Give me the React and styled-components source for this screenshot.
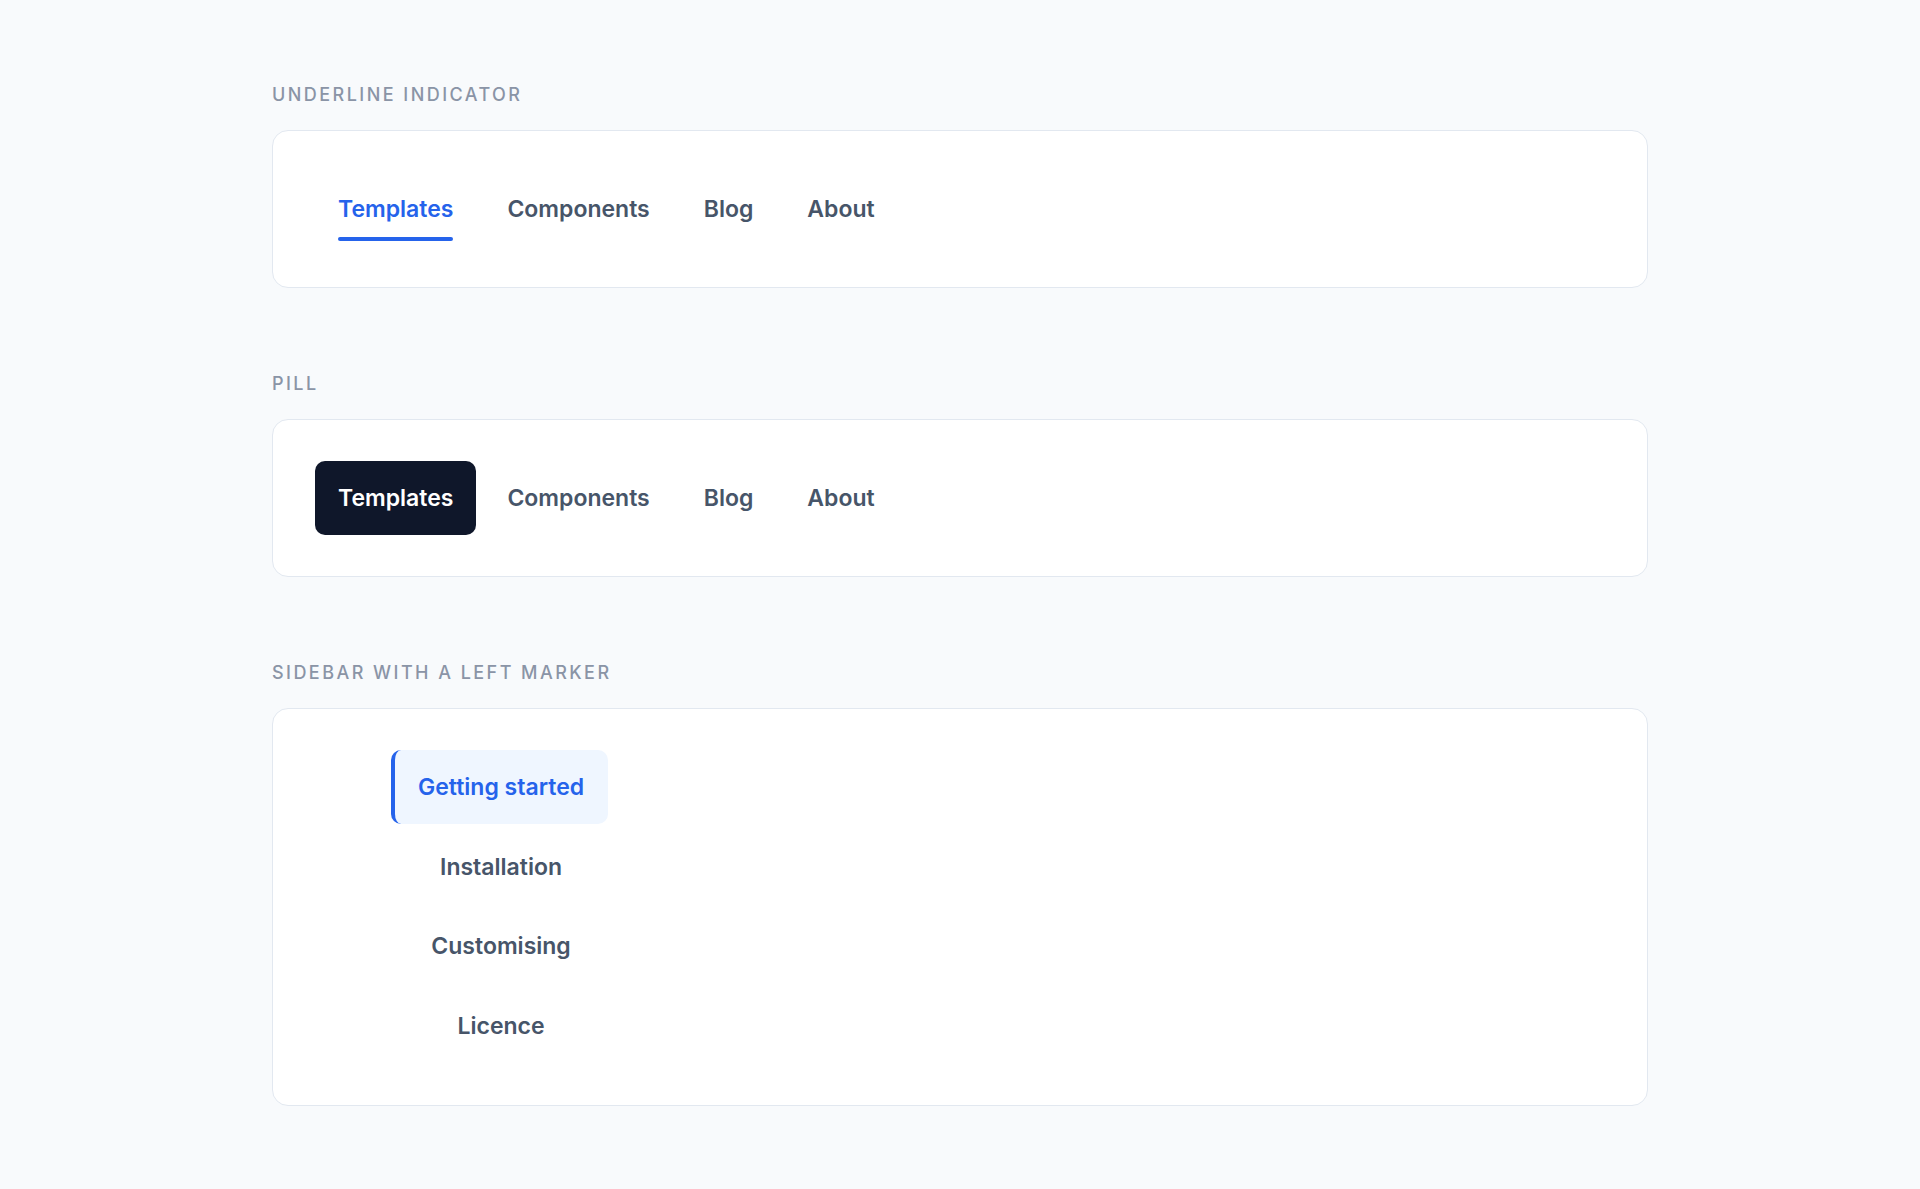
import styled, { createGlobalStyle } from "styled-components";

const GlobalStyle = createGlobalStyle`
  body {
    margin: 0;
    background: #f8fafc;
    font-family: Inter, "Noto Sans", "Liberation Sans", sans-serif;
    -webkit-font-smoothing: antialiased;
  }
`;

const Page = styled.main`
  width: 1376px;
  margin: 0 auto;
  padding: 81px 0 80px;
  display: flex;
  flex-direction: column;
  gap: 82px;
`;

const Section = styled.section`
  display: flex;
  flex-direction: column;
`;

const Label = styled.h2`
  margin: 0 0 22px;
  font-size: 18px;
  line-height: 27px;
  font-weight: 500;
  letter-spacing: 2.45px;
  text-transform: uppercase;
  color: #8a94a6;
`;

const Card = styled.div`
  background: #fff;
  border: 1px solid #e2e8f0;
  border-radius: 16px;
  padding: ${({ $tall }) => ($tall ? "41px 42px 42px" : "41px 42px")};
`;

const TabList = styled.nav`
  display: flex;
  align-items: center;
  gap: 8px;
`;

const Tab = styled.a`
  position: relative;
  display: block;
  padding: 20px 23px;
  font-size: 23px;
  line-height: 34px;
  font-weight: 600;
  color: ${({ $active }) => ($active ? "#2563eb" : "#475569")};
  text-decoration: none;
  cursor: pointer;

  &::after {
    content: "";
    position: absolute;
    left: 23px;
    right: 23px;
    bottom: 5px;
    height: 4px;
    border-radius: 2px;
    background: ${({ $active }) => ($active ? "#2563eb" : "transparent")};
  }
`;

const Pill = styled.a`
  display: block;
  padding: 20px 23px;
  border-radius: 10px;
  font-size: 23px;
  line-height: 34px;
  font-weight: 600;
  text-decoration: none;
  cursor: pointer;
  background: ${({ $active }) => ($active ? "#0f172a" : "transparent")};
  color: ${({ $active }) => ($active ? "#fff" : "#475569")};
`;

const SideList = styled.nav`
  margin-left: 76px;
  width: max-content;
  display: flex;
  flex-direction: column;
  gap: 5.5px;
`;

const SideItem = styled.a`
  display: block;
  padding: 20px 24px 20px 23px;
  border-left: 4px solid ${({ $active }) => ($active ? "#2563eb" : "transparent")};
  border-radius: 10px;
  background: ${({ $active }) => ($active ? "#eff6ff" : "transparent")};
  color: ${({ $active }) => ($active ? "#2563eb" : "#475569")};
  font-size: 23px;
  line-height: 34px;
  font-weight: 600;
  text-align: center;
  text-decoration: none;
  cursor: pointer;
`;

const tabs = ["Templates", "Components", "Blog", "About"];
const docs = ["Getting started", "Installation", "Customising", "Licence"];

export default function App() {
  return (
    <>
      <GlobalStyle />
      <Page>
        <Section>
          <Label>Underline indicator</Label>
          <Card>
            <TabList>
              {tabs.map((t, i) => (
                <Tab key={t} $active={i === 0}>
                  {t}
                </Tab>
              ))}
            </TabList>
          </Card>
        </Section>

        <Section>
          <Label>Pill</Label>
          <Card>
            <TabList>
              {tabs.map((t, i) => (
                <Pill key={t} $active={i === 0}>
                  {t}
                </Pill>
              ))}
            </TabList>
          </Card>
        </Section>

        <Section>
          <Label>Sidebar with a left marker</Label>
          <Card $tall>
            <SideList>
              {docs.map((d, i) => (
                <SideItem key={d} $active={i === 0}>
                  {d}
                </SideItem>
              ))}
            </SideList>
          </Card>
        </Section>
      </Page>
    </>
  );
}
